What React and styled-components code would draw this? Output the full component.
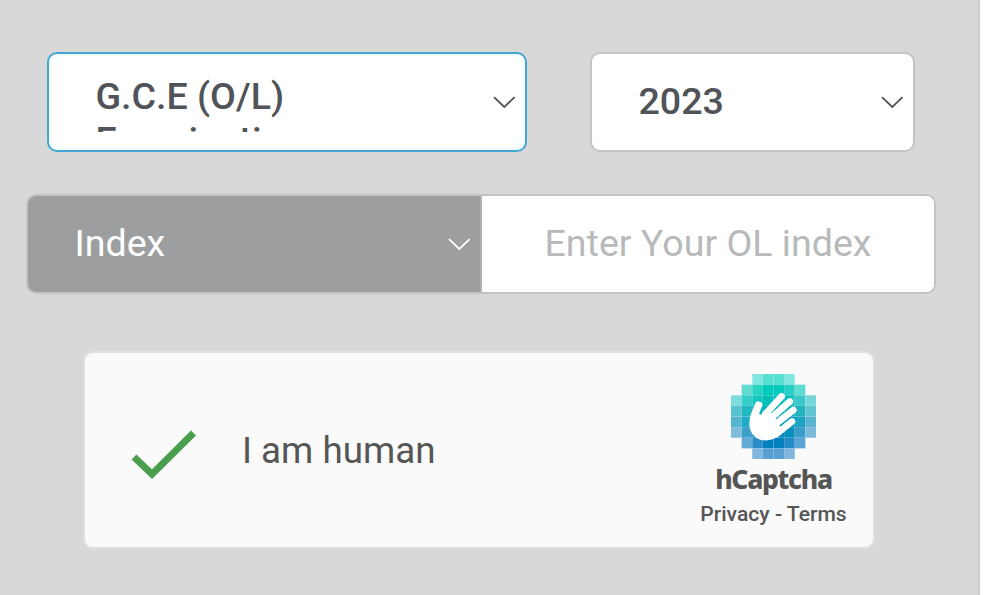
import React from 'react';
import styled, { createGlobalStyle } from 'styled-components';

const GlobalStyle = createGlobalStyle`
  * { box-sizing: border-box; }
  html, body { margin: 0; background: #fff; overflow: hidden; }
  body { font-family: Roboto, "Liberation Sans", sans-serif; }
`;

const Panel = styled.main`
  width: 980px;
  height: 595px;
  padding: 52px 0 0 26px;
  background: #d8d8d8;
  border-right: 2px solid #cbcbcb;
`;

const SelectRow = styled.div`
  display: flex;
  gap: 63px;
  padding-left: 21px;
`;

const SelectBox = styled.div`
  display: flex;
  justify-content: space-between;
  width: ${({ $width }) => $width}px;
  height: 100px;
  padding: 18px 9px 18px 46.5px;
  background: #fff;
  color: #505357;
  border: 2px solid ${({ $active }) => ($active ? '#46a6d3' : '#c4c4c4')};
  border-radius: 10px;
  box-shadow: ${({ $active }) => ($active ? 'inset 0 0 5px #dcfafc' : 'none')};
`;

const SelectValue = styled.span`
  width: 230px;
  height: 60px;
  padding-top: 2px;
  overflow: hidden;
  font-size: 37.6px;
  font-weight: 500;
  line-height: ${({ $multiline }) => ($multiline ? 44 : 54)}px;
`;

const ChevronIcon = styled.svg`
  align-self: center;
  flex: none;
  width: 24px;
  height: 14px;
  fill: none;
  stroke: currentColor;
  stroke-width: 1.8;
`;

const IndexGroup = styled.div`
  display: flex;
  width: 910px;
  height: 100px;
  margin-top: 42px;
  border: 2px solid #c2c3c3;
  border-radius: 10px;
  overflow: hidden;
  background: #fff;
  font-size: 37.6px;
`;

const IndexSelect = styled.div`
  display: flex;
  align-items: center;
  justify-content: space-between;
  width: 454px;
  padding: 0 9px 0 46.5px;
  background: #9d9ea0;
  color: #fff;
  border-right: 2px solid #b0b1b2;
`;

const IndexLabel = styled.span`
  padding-bottom: 2px;
`;

const IndexInput = styled.input`
  flex: 1;
  min-width: 0;
  padding: 0 0 2px;
  border: 0;
  outline: 0;
  background: #fff;
  font: inherit;
  text-align: center;
  &::placeholder { color: #b8b9ba; opacity: 1; }
`;

const CaptchaCard = styled.section`
  display: flex;
  justify-content: space-between;
  width: 792px;
  height: 198px;
  margin: 57px 0 0 57px;
  padding: 0 26.5px 0 45.5px;
  background: #fafafa;
  border: 2px solid #e0e0e0;
  border-radius: 10px;
  color: #555;
`;

const CaptchaStatus = styled.div`
  display: flex;
  align-items: center;
  gap: 45.5px;
  font-size: 36.75px;
`;

const CheckIcon = styled.svg`
  width: 66px;
  height: 50px;
  margin-top: 10px;
  fill: none;
  stroke: #4a9f4e;
  stroke-width: 7;
`;

const Brand = styled.div`
  display: flex;
  flex-direction: column;
  align-items: center;
  width: 146px;
  padding-top: 21px;
`;

const BrandLogo = styled.svg`
  width: 85px;
  height: 85px;
`;

const BrandName = styled.div`
  margin-top: 3px;
  font: 800 26.5px/34px "Noto Sans", sans-serif;
  letter-spacing: -1.3px;
  white-space: nowrap;
`;

const BrandLinks = styled.div`
  margin-top: 5px;
  font-size: 21.1px;
  font-weight: 500;
  line-height: 26px;
  white-space: nowrap;
`;

const Chevron = () => (
  <ChevronIcon viewBox="0 0 24 14"><path d="M2 2.2 12.3 12 22.6 2.2" /></ChevronIcon>
);

const tiles = [
  [null, null, '#80e8de', '#57dfd1', '#57dfd1', '#80e8de', null, null],
  [null, '#5fdbd0', '#29d3c4', '#00cabb', '#00cabb', '#29cfc4', '#61dcd2', null],
  ['#7eddda', '#36cdc9', '#13c6c0', '#00bfb8', '#00bdbb', '#0abfbf', '#3bc8c9', '#76d6da'],
  ['#55c3cf', '#23b8c3', '#00b1be', '#00b1be', '#00b1be', '#00adbd', '#24b3c1', '#61c5d1'],
  ['#55b5ce', '#1eabc4', '#009fbe', '#009fbe', '#009fbe', '#0097bb', '#1aa3c3', '#59b5cf'],
  ['#80bdda', '#3ba0ca', '#1094c2', '#008cbd', '#008abd', '#078fc1', '#389bc8', '#7ab9da'],
  [null, '#62aad6', '#2d8dc7', '#0480be', '#0480be', '#238ac6', '#5aa5d5', null],
  [null, null, '#80b5dc', '#579fd2', '#579fd2', '#80b5dc', null, null],
];

const HandLogo = () => (
  <BrandLogo viewBox="0 0 254 254" role="img" aria-label="hCaptcha logo">
    {tiles.map((row, y) =>
      row.map((color, x) =>
        color && (
          <rect key={`${x}-${y}`} x={x * 31.75} y={y * 31.75} width="31.75" height="31.75"
            fill={color} stroke="#fff" strokeOpacity=".1" strokeWidth="1.2" />
        )
      )
    )}
    <g fill="none" stroke="#fff" strokeLinecap="round" strokeWidth="20">
      <path d="M82 93 68 129" strokeWidth="22" />
      <path d="M151 67 102 120" />
      <path d="M176 82 108 142" />
      <path d="M186 108 120 160" />
      <path d="M182 142 135 180" />
    </g>
    <path fill="#fff" d="M57 130 72 112 93 123 112 108 132 130 150 163 142 184C125 200 100 202 82 194C60 184 50 160 57 130Z" />
  </BrandLogo>
);

export default function App() {
  return (
    <>
      <GlobalStyle />
      <Panel>
        <SelectRow>
          <SelectBox $width={480} $active>
            <SelectValue $multiline>G.C.E (O/L) Examination</SelectValue>
            <Chevron />
          </SelectBox>
          <SelectBox $width={325}>
            <SelectValue>2023</SelectValue>
            <Chevron />
          </SelectBox>
        </SelectRow>
        <IndexGroup>
          <IndexSelect><IndexLabel>Index</IndexLabel><Chevron /></IndexSelect>
          <IndexInput placeholder="Enter Your OL index" />
        </IndexGroup>
        <CaptchaCard>
          <CaptchaStatus>
            <CheckIcon viewBox="0 0 66 50"><path d="M3 27 21 44.2 62.5 3" /></CheckIcon>
            <span>I am human</span>
          </CaptchaStatus>
          <Brand>
            <HandLogo />
            <BrandName>hCaptcha</BrandName>
            <BrandLinks>Privacy - Terms</BrandLinks>
          </Brand>
        </CaptchaCard>
      </Panel>
    </>
  );
}
